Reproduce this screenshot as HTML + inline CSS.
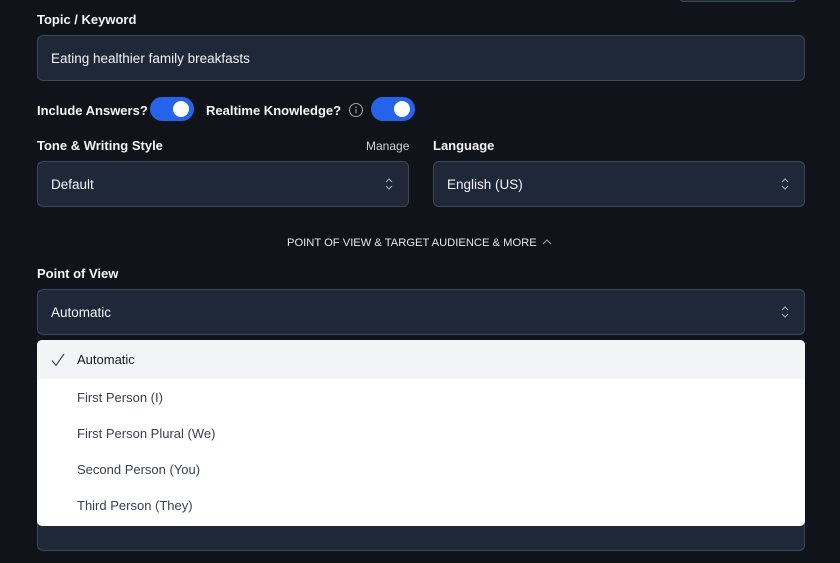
<!DOCTYPE html>
<html><head><meta charset="utf-8"><style>
*{box-sizing:border-box;margin:0;padding:0}
body{width:840px;height:563px;background:#11131b;font-family:"Liberation Sans",sans-serif;position:relative;overflow:hidden;color:#fff}
.abs{position:absolute}
.lbl{font-size:13px;font-weight:bold;color:#f3f4f6}
.box{position:absolute;background:#1f2838;border:1px solid #3f4756;border-radius:6px;font-size:13.5px;color:#f3f4f6;padding-left:13px;display:flex;align-items:center}
.chev{position:absolute;right:14px;top:50%;transform:translateY(-50%)}
.tog{position:absolute;width:44px;height:24px;border-radius:12px;background:#2563eb}
.tog:after{content:"";position:absolute;right:5px;top:4px;width:16px;height:16px;border-radius:50%;background:#fff}
.dd{position:absolute;left:37px;top:340px;width:768px;height:186px;background:#fff;border-radius:5px;overflow:hidden}
.it{height:36px;display:flex;align-items:center;padding-left:40px;font-size:13px;color:#374151}
</style></head><body>
<div class="abs" style="left:680px;top:-4px;width:116px;height:6px;border:1px solid #3f4756;border-radius:4px;background:#1f2838"></div>
<div class="abs lbl" style="left:37px;top:12px">Topic / Keyword</div>
<div class="box" style="left:37px;top:35px;width:768px;height:46px">Eating healthier family breakfasts</div>
<div class="abs lbl" style="left:37px;top:103px">Include Answers?</div>
<div class="tog" style="left:150px;top:97px"></div>
<div class="abs lbl" style="left:206px;top:103px">Realtime Knowledge?</div>
<svg class="abs" style="left:348px;top:102px" width="16" height="16" viewBox="0 0 16 16"><circle cx="8" cy="8" r="6.5" fill="none" stroke="#9ca3af" stroke-width="1"/><line x1="8" y1="7" x2="8" y2="11.5" stroke="#9ca3af"/><circle cx="8" cy="5" r=".8" fill="#9ca3af"/></svg>
<div class="tog" style="left:371px;top:97px"></div>
<div class="abs lbl" style="left:37px;top:138px">Tone &amp; Writing Style</div>
<div class="abs" style="left:366px;top:139px;font-size:12px;color:#d1d5db">Manage</div>
<div class="abs lbl" style="left:433px;top:138px">Language</div>
<div class="box" style="left:37px;top:161px;width:372px;height:46px">Default<svg class="chev" width="10" height="14" viewBox="0 0 10 14"><path d="M2 5l3-3 3 3M2 9l3 3 3-3" fill="none" stroke="#9ca3af" stroke-width="1.2"/></svg></div>
<div class="box" style="left:433px;top:161px;width:372px;height:46px">English (US)<svg class="chev" width="10" height="14" viewBox="0 0 10 14"><path d="M2 5l3-3 3 3M2 9l3 3 3-3" fill="none" stroke="#9ca3af" stroke-width="1.2"/></svg></div>
<div class="abs" style="left:287px;top:237px;font-size:11.2px;color:#e5e7eb">POINT OF VIEW &amp; TARGET AUDIENCE &amp; MORE <svg width="10" height="8" viewBox="0 0 10 8" style="margin-left:2px"><path d="M1 6l4-4 4 4" fill="none" stroke="#9ca3af" stroke-width="1.1"/></svg></div>
<div class="abs lbl" style="left:37px;top:266px">Point of View</div>
<div class="box" style="left:37px;top:289px;width:768px;height:46px">Automatic<svg class="chev" width="10" height="14" viewBox="0 0 10 14"><path d="M2 5l3-3 3 3M2 9l3 3 3-3" fill="none" stroke="#9ca3af" stroke-width="1.2"/></svg></div>
<div class="box" style="left:37px;top:500px;width:768px;height:51px"></div>
<div class="dd">
<div class="it" style="background:#f3f4f6;height:39px;color:#111827;position:relative"><svg style="position:absolute;left:14px;top:13px" width="14" height="14" viewBox="0 0 14 14"><path d="M1 7.5l4 5L13 1" fill="none" stroke="#374151" stroke-width="1.1"/></svg>Automatic</div>
<div class="it">First Person (I)</div>
<div class="it">First Person Plural (We)</div>
<div class="it">Second Person (You)</div>
<div class="it">Third Person (They)</div>
</div>
</body></html>
